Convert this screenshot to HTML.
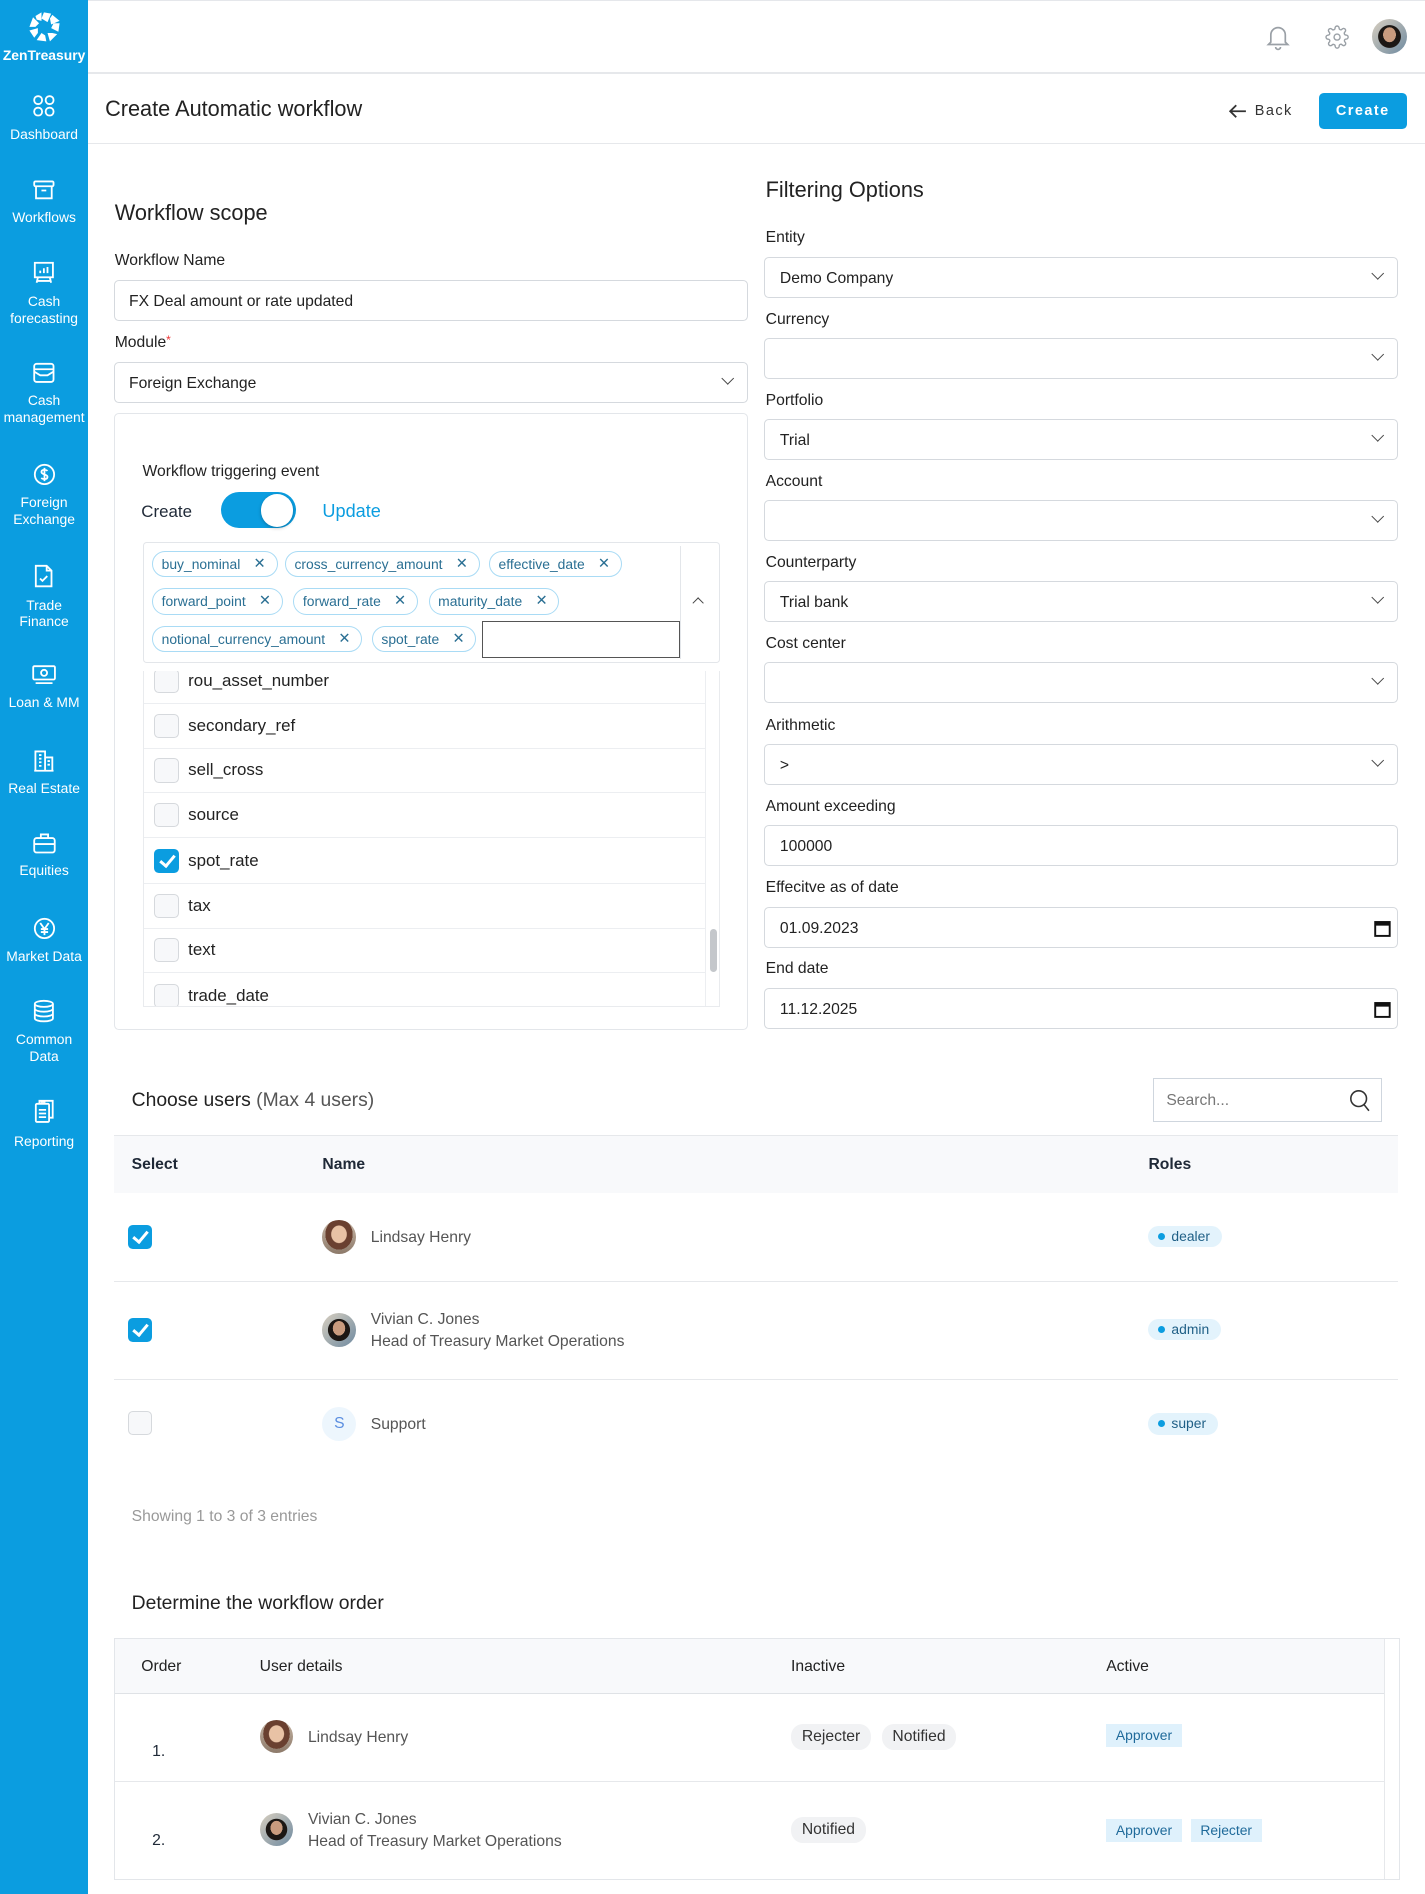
<!DOCTYPE html>
<html><head><meta charset="utf-8"><style>
html,body{margin:0;padding:0}
body{width:1180px;height:1568px;zoom:1.20763;position:relative;overflow:hidden;background:#fff;font-family:"Liberation Sans",sans-serif;color:#1f2937;font-size:14px;line-height:1.4}
.a{position:absolute}
.sb{left:0;top:0;width:73px;height:1568px;background:#0b9de0;color:#fff}
.ni{position:absolute;left:0;width:73px;text-align:center;font-size:11.5px;line-height:14px;color:#fff}
.ni svg{display:block;margin:0 auto 7px}
.lbl{position:absolute;font-size:13px;color:#222}
.inp{position:absolute;border:1px solid #d5d9de;border-radius:4px;box-sizing:border-box;height:34px;font-size:13px;line-height:35px;padding-left:12px;color:#222;background:#fff}
.chev{position:absolute;right:12px;top:9px;width:7px;height:7px;border-right:1.5px solid #444;border-bottom:1.5px solid #444;transform:rotate(45deg)}
.chip{position:absolute;height:22px;border:1px solid #a9dbf5;border-radius:12px;box-sizing:border-box;font-size:11.5px;line-height:20px;color:#2a6f93;padding:0 30px 0 7px}
.chip:after{content:"\2715";position:absolute;right:9px;top:0;font-size:12px;color:#2a6f93}
.row{position:absolute;left:118px;width:466px;height:37px;border-bottom:1px solid #eceef1;box-sizing:border-box}
.cb{position:absolute;left:9px;top:8px;width:20px;height:20px;border:1px solid #d6d9dd;border-radius:4px;box-sizing:border-box;background:#f7f8fa}
.cb.on{background:#0b9de0;border-color:#0b9de0}
.cb.on:after{content:"";position:absolute;left:6px;top:2px;width:5px;height:10px;border-right:2.5px solid #fff;border-bottom:2.5px solid #fff;transform:rotate(40deg)}
.row span{position:absolute;left:37px;top:8px;font-size:14px;color:#222}
.av{position:absolute;width:28px;height:28px;border-radius:50%;background:radial-gradient(ellipse 40% 45% at 50% 42%,#e8c2a5 0 55%,#6a4030 60% 100%,transparent 101%),linear-gradient(#c7b6a6,#8d7a6a)}
.av2{background:radial-gradient(ellipse 30% 35% at 50% 45%,#c99b7e 0 60%,transparent 62%),radial-gradient(circle at 50% 50%,#1c1714 0 45%,transparent 47%),linear-gradient(135deg,#d8cfc0,#6f8aa0)}
.role{position:absolute;height:18px;border-radius:9px;background:#e3f3fc;font-size:11.5px;line-height:18px;color:#1f5f86;padding:0 10px 0 19px}
.role:before{content:"";position:absolute;left:8px;top:6px;width:6px;height:6px;border-radius:50%;background:#0b9de0}
.pill{position:absolute;height:21px;border-radius:10px;background:#f1f2f4;font-size:13px;line-height:21px;padding:0 9px;color:#333}
.tag{position:absolute;height:19px;background:#dff1fc;font-size:11.5px;line-height:19px;padding:0 8px;color:#1f6a9a}
</style></head><body>
<div class="a sb">
<svg class="a" style="left:22px;top:8px" width="30" height="28" viewBox="0 0 30 28"><g fill="#fff"><path d="M14 2l6 1-3 7-5-3z"/><path d="M21 4l6 5-7 3-1-5z"/><path d="M27 11l-1 7-6-3 2-4z"/><path d="M25 20l-6 6-2-7 4 0z"/><path d="M16 26l-8-1 4-6 3 2z"/><path d="M6 23l-4-6 7-2 0 4z"/><path d="M2 14l3-8 5 5-3 3z"/><path d="M7 5l5-3 0 7-4-1z"/></g></svg>
<div class="a" style="left:0;width:73px;top:39px;text-align:center;font-size:11.5px;font-weight:bold;color:#fff;line-height:14px">ZenTreasury</div>
<div class="ni" style="top:79px"><svg width="18" height="18" viewBox="0 0 18 18" fill="none" stroke="#fff" stroke-width="1.5"><rect x="1" y="1" width="6.5" height="6.5" rx="3"/><rect x="10.5" y="1" width="6.5" height="6.5" rx="3"/><rect x="1" y="10.5" width="6.5" height="6.5" rx="3"/><rect x="10.5" y="10.5" width="6.5" height="6.5" rx="3"/></svg>Dashboard</div>
<div class="ni" style="top:148px"><svg width="18" height="18" viewBox="0 0 18 18" fill="none" stroke="#fff" stroke-width="1.5"><rect x="1" y="2" width="16" height="4" rx="1"/><path d="M2.5 6v10h13V6M7 9.5h4"/></svg>Workflows</div>
<div class="ni" style="top:216px"><svg width="18" height="20" viewBox="0 0 18 20" fill="none" stroke="#fff" stroke-width="1.5"><rect x="1.5" y="1.5" width="15" height="12"/><path d="M6 10V8M9 10V6M12 10V5M4 14l-1 4M14 14l1 4M3 16.5h12"/></svg>Cash<br>forecasting</div>
<div class="ni" style="top:300px"><svg width="18" height="18" viewBox="0 0 18 18" fill="none" stroke="#fff" stroke-width="1.5"><rect x="1" y="1.5" width="16" height="15" rx="2"/><path d="M1 6h16M1 8l5 3h6l5-3"/></svg>Cash<br>management</div>
<div class="ni" style="top:383px"><svg width="19" height="19" viewBox="0 0 19 19" fill="none" stroke="#fff" stroke-width="1.5"><circle cx="9.5" cy="9.5" r="8"/><path d="M12 6.5c-1-1-5-1.5-5 1s5 1.5 5 4-4 2-5.2 1M9.5 4v11"/></svg>Foreign<br>Exchange</div>
<div class="ni" style="top:467px"><svg width="16" height="20" viewBox="0 0 16 20" fill="none" stroke="#fff" stroke-width="1.5"><path d="M1.5 1.5h9l4 4v13h-13z M10.5 1.5v4h4M5 12l2 2 4-4"/></svg>Trade<br>Finance</div>
<div class="ni" style="top:551px"><svg width="20" height="17" viewBox="0 0 20 17" fill="none" stroke="#fff" stroke-width="1.5"><rect x="1" y="1" width="18" height="11" rx="1"/><circle cx="10" cy="6.5" r="2.5"/><path d="M3 15h14"/></svg>Loan &amp; MM</div>
<div class="ni" style="top:620px"><svg width="18" height="19" viewBox="0 0 18 19" fill="none" stroke="#fff" stroke-width="1.5"><path d="M2 18V2h8v16M10 7h6v11M1 18h16M5 5h2M5 8h2M5 11h2M5 14h2M12 10h2M12 13h2"/></svg>Real Estate</div>
<div class="ni" style="top:689px"><svg width="19" height="18" viewBox="0 0 19 18" fill="none" stroke="#fff" stroke-width="1.5"><rect x="1" y="5" width="17" height="12" rx="2"/><path d="M6.5 5V2h6v3M1 10h17"/></svg>Equities</div>
<div class="ni" style="top:759px"><svg width="19" height="19" viewBox="0 0 19 19" fill="none" stroke="#fff" stroke-width="1.5"><circle cx="9.5" cy="9.5" r="8"/><path d="M6 5l3.5 5 3.5-5M9.5 10v5M6.5 10h6M6.5 12.5h6"/></svg>Market Data</div>
<div class="ni" style="top:827px"><svg width="18" height="20" viewBox="0 0 18 20" fill="none" stroke="#fff" stroke-width="1.5"><ellipse cx="9" cy="4" rx="7.5" ry="2.5"/><path d="M1.5 4v12c0 1.4 3.4 2.5 7.5 2.5s7.5-1.1 7.5-2.5V4M1.5 8c0 1.4 3.4 2.5 7.5 2.5S16.5 9.4 16.5 8M1.5 12c0 1.4 3.4 2.5 7.5 2.5s7.5-1.1 7.5-2.5"/></svg>Common<br>Data</div>
<div class="ni" style="top:910px"><svg width="17" height="21" viewBox="0 0 17 21" fill="none" stroke="#fff" stroke-width="1.5"><rect x="1.5" y="4" width="11" height="15" rx="1"/><path d="M4.5 4V1.5h11v14h-3M4 9h6M4 12h6M4 15h6M5.5 2.5h4"/></svg>Reporting</div>
</div>

<div class="a" style="left:73px;top:0;width:1107px;height:1px;background:#e5e7eb"></div>
<div class="a" style="left:73px;top:60px;width:1107px;height:1px;background:#e6e8eb"></div>
<svg class="a" style="left:1048px;top:20px" width="20" height="22" viewBox="0 0 20 22" fill="none" stroke="#9aa0a6" stroke-width="1.4"><path d="M4 15V9a6 6 0 0112 0v6l2 2H2z M8 19a2 2 0 004 0"/></svg>
<svg class="a" style="left:1097px;top:21px" width="20" height="20" viewBox="0 0 24 24" fill="none" stroke="#9aa0a6" stroke-width="1.4"><circle cx="12" cy="12" r="3"/><path d="M19.4 15a1.7 1.7 0 00.3 1.8l.1.1a2 2 0 11-2.8 2.8l-.1-.1a1.7 1.7 0 00-1.8-.3 1.7 1.7 0 00-1 1.5V21a2 2 0 11-4 0v-.1a1.7 1.7 0 00-1.1-1.5 1.7 1.7 0 00-1.8.3l-.1.1a2 2 0 11-2.8-2.8l.1-.1a1.7 1.7 0 00.3-1.8 1.7 1.7 0 00-1.5-1H3a2 2 0 110-4h.1a1.7 1.7 0 001.5-1.1 1.7 1.7 0 00-.3-1.8l-.1-.1a2 2 0 112.8-2.8l.1.1a1.7 1.7 0 001.8.3H9a1.7 1.7 0 001-1.5V3a2 2 0 114 0v.1a1.7 1.7 0 001 1.5 1.7 1.7 0 001.8-.3l.1-.1a2 2 0 112.8 2.8l-.1.1a1.7 1.7 0 00-.3 1.8V9a1.7 1.7 0 001.5 1H21a2 2 0 110 4h-.1a1.7 1.7 0 00-1.5 1z"/></svg>
<div class="av av2" style="left:1136px;top:16px;width:29px;height:29px"></div>
<div class="a" style="left:87px;top:78px;font-size:18px;color:#222">Create Automatic workflow</div>
<svg class="a" style="left:1018px;top:86px" width="15" height="12" viewBox="0 0 15 12" fill="none" stroke="#333" stroke-width="1.5"><path d="M14 6H2M6 1L1 6l5 5"/></svg>
<div class="a" style="left:1039px;top:84px;font-size:12px;letter-spacing:1.2px;color:#333">Back</div>
<div class="a" style="left:1092px;top:77px;width:73px;height:30px;background:#0b9de0;border-radius:4px;color:#fff;font-size:12px;font-weight:bold;letter-spacing:1.2px;text-align:center;line-height:30px">Create</div>
<div class="a" style="left:73px;top:118px;width:1107px;height:1px;background:#e6e8eb"></div>

<div class="a" style="left:95px;top:164px;font-size:18px;color:#222">Workflow scope</div>
<div class="lbl" style="left:95px;top:207px">Workflow Name</div>
<div class="inp" style="left:94px;top:232px;width:525px">FX Deal amount or rate updated</div>
<div class="lbl" style="left:95px;top:275px">Module<span style="color:#e33;font-size:10px;vertical-align:top">*</span></div>
<div class="inp" style="left:94px;top:300px;width:525px">Foreign Exchange<i class="chev"></i></div>
<div class="a" style="left:94px;top:342px;width:525px;height:511px;border:1px solid #e3e6ea;border-radius:4px;box-sizing:border-box"></div>
<div class="lbl" style="left:118px;top:382px">Workflow triggering event</div>
<div class="a" style="left:117px;top:414px;font-size:14px">Create</div>
<div class="a" style="left:183px;top:407px;width:62px;height:30px;border-radius:15px;background:#0b9de0"></div>
<div class="a" style="left:216px;top:409px;width:27px;height:27px;border-radius:50%;background:#fff;box-shadow:0 1px 3px rgba(0,0,0,.25)"></div>
<div class="a" style="left:267px;top:413px;font-size:15px;color:#0b9de0">Update</div>
<div class="a" style="left:118px;top:449px;width:478px;height:100px;border:1px solid #e3e6ea;border-radius:3px;box-sizing:border-box"></div>
<div class="a" style="left:563px;top:452px;width:1px;height:94px;background:#e3e6ea"></div>
<div class="a" style="left:575px;top:496px;width:6px;height:6px;border-left:1.3px solid #444;border-top:1.3px solid #444;transform:rotate(45deg)"></div>
<div class="chip" style="left:126px;top:456px">buy_nominal</div>
<div class="chip" style="left:236px;top:456px">cross_currency_amount</div>
<div class="chip" style="left:405px;top:456px">effective_date</div>
<div class="chip" style="left:126px;top:487px">forward_point</div>
<div class="chip" style="left:243px;top:487px">forward_rate</div>
<div class="chip" style="left:355px;top:487px">maturity_date</div>
<div class="chip" style="left:126px;top:518px">notional_currency_amount</div>
<div class="chip" style="left:308px;top:518px">spot_rate</div>
<div class="a" style="left:399px;top:514px;width:164px;height:31px;border:1px solid #555;box-sizing:border-box"></div>
<div class="a" style="left:118px;top:556px;width:478px;height:278px;border:1px solid #e9ebee;border-top:none;box-sizing:border-box;overflow:hidden">
<div class="row" style="left:0;top:-10px"><i class="cb"></i><span>rou_asset_number</span></div>
<div class="row" style="left:0;top:27px"><i class="cb"></i><span>secondary_ref</span></div>
<div class="row" style="left:0;top:64px"><i class="cb"></i><span>sell_cross</span></div>
<div class="row" style="left:0;top:101px"><i class="cb"></i><span>source</span></div>
<div class="row" style="left:0;top:139px"><i class="cb on"></i><span>spot_rate</span></div>
<div class="row" style="left:0;top:176px"><i class="cb"></i><span>tax</span></div>
<div class="row" style="left:0;top:213px"><i class="cb"></i><span>text</span></div>
<div class="row" style="left:0;top:251px"><i class="cb"></i><span>trade_date</span></div>
<div class="a" style="left:465px;top:0;width:1px;height:278px;background:#eceef1"></div>
<div class="a" style="left:469px;top:213px;width:6px;height:36px;border-radius:3px;background:#c4c7cb"></div>
</div>

<div class="a" style="left:634px;top:145px;font-size:18px;color:#222">Filtering Options</div>
<div class="lbl" style="left:634px;top:188px">Entity</div>
<div class="inp" style="left:633px;top:213px;width:525px">Demo Company<i class="chev"></i></div>
<div class="lbl" style="left:634px;top:256px">Currency</div>
<div class="inp" style="left:633px;top:280px;width:525px"><i class="chev"></i></div>
<div class="lbl" style="left:634px;top:323px">Portfolio</div>
<div class="inp" style="left:633px;top:347px;width:525px">Trial<i class="chev"></i></div>
<div class="lbl" style="left:634px;top:390px">Account</div>
<div class="inp" style="left:633px;top:414px;width:525px"><i class="chev"></i></div>
<div class="lbl" style="left:634px;top:457px">Counterparty</div>
<div class="inp" style="left:633px;top:481px;width:525px">Trial bank<i class="chev"></i></div>
<div class="lbl" style="left:634px;top:524px">Cost center</div>
<div class="inp" style="left:633px;top:548px;width:525px"><i class="chev"></i></div>
<div class="lbl" style="left:634px;top:592px">Arithmetic</div>
<div class="inp" style="left:633px;top:616px;width:525px">&gt;<i class="chev"></i></div>
<div class="lbl" style="left:634px;top:659px">Amount exceeding</div>
<div class="inp" style="left:633px;top:683px;width:525px">100000</div>
<div class="lbl" style="left:634px;top:726px">Effecitve as of date</div>
<div class="inp" style="left:633px;top:751px;width:525px">01.09.2023<svg class="a" style="right:5px;top:9px" width="14" height="15" viewBox="0 0 14 15"><rect x="1" y="2.5" width="12" height="11.5" fill="none" stroke="#111" stroke-width="1.6"/><rect x="1" y="2.5" width="12" height="3" fill="#111"/></svg></div>
<div class="lbl" style="left:634px;top:793px">End date</div>
<div class="inp" style="left:633px;top:818px;width:525px">11.12.2025<svg class="a" style="right:5px;top:9px" width="14" height="15" viewBox="0 0 14 15"><rect x="1" y="2.5" width="12" height="11.5" fill="none" stroke="#111" stroke-width="1.6"/><rect x="1" y="2.5" width="12" height="3" fill="#111"/></svg></div>

<div class="a" style="left:109px;top:900px;font-size:16px;color:#222">Choose users <span style="color:#555">(Max 4 users)</span></div>
<div class="a" style="left:955px;top:893px;width:189px;height:36px;border:1px solid #cfd6de;box-sizing:border-box;font-size:13px;line-height:36px;padding-left:10px;color:#777">Search...<svg class="a" style="right:8px;top:8px" width="18" height="19" viewBox="0 0 18 19" fill="none" stroke="#333" stroke-width="1.3"><circle cx="8" cy="8" r="6.5"/><path d="M12.5 13l4 5"/></svg></div>
<div class="a" style="left:94px;top:940px;width:1064px;height:48px;background:#f8f9fb;border-top:1px solid #e6e8eb;box-sizing:border-box"></div>
<div class="a" style="left:109px;top:956px;font-size:13px;font-weight:bold">Select</div>
<div class="a" style="left:267px;top:956px;font-size:13px;font-weight:bold">Name</div>
<div class="a" style="left:951px;top:956px;font-size:13px;font-weight:bold">Roles</div>
<i class="cb on" style="left:106px;top:1014px;position:absolute"></i>
<div class="av" style="left:267px;top:1010px"></div>
<div class="a" style="left:307px;top:1016px;font-size:13px;color:#555">Lindsay Henry</div>
<div class="role" style="left:951px;top:1015px">dealer</div>
<div class="a" style="left:94px;top:1061px;width:1064px;height:1px;background:#e6e8eb"></div>
<i class="cb on" style="left:106px;top:1091px;position:absolute"></i>
<div class="av av2" style="left:267px;top:1087px"></div>
<div class="a" style="left:307px;top:1084px;font-size:13px;color:#555">Vivian C. Jones</div>
<div class="a" style="left:307px;top:1102px;font-size:13px;color:#555">Head of Treasury Market Operations</div>
<div class="role" style="left:951px;top:1092px">admin</div>
<div class="a" style="left:94px;top:1142px;width:1064px;height:1px;background:#e6e8eb"></div>
<i class="cb" style="left:106px;top:1168px;position:absolute"></i>
<div class="a" style="left:267px;top:1165px;width:28px;height:28px;border-radius:50%;background:#edf6fd;color:#5b8ee0;font-size:13px;text-align:center;line-height:28px">S</div>
<div class="a" style="left:307px;top:1171px;font-size:13px;color:#555">Support</div>
<div class="role" style="left:951px;top:1170px">super</div>
<div class="a" style="left:109px;top:1247px;font-size:13px;color:#999">Showing 1 to 3 of 3 entries</div>

<div class="a" style="left:109px;top:1317px;font-size:16px;color:#222">Determine the workflow order</div>
<div class="a" style="left:94px;top:1356px;width:1065px;height:201px;border:1px solid #e3e6ea;box-sizing:border-box"></div>
<div class="a" style="left:95px;top:1357px;width:1051px;height:45px;background:#f8f9fb;border-bottom:1px solid #dfe2e6"></div>
<div class="a" style="left:1146px;top:1357px;width:1px;height:199px;background:#e6e8eb"></div>
<div class="a" style="left:117px;top:1371px;font-size:13px;color:#222">Order</div>
<div class="a" style="left:215px;top:1371px;font-size:13px;color:#222">User details</div>
<div class="a" style="left:655px;top:1371px;font-size:13px;color:#222">Inactive</div>
<div class="a" style="left:916px;top:1371px;font-size:13px;color:#222">Active</div>
<div class="a" style="left:126px;top:1442px;font-size:13px">1.</div>
<div class="av" style="left:215px;top:1424px"></div>
<div class="a" style="left:255px;top:1430px;font-size:13px;color:#555">Lindsay Henry</div>
<div class="pill" style="left:655px;top:1428px">Rejecter</div>
<div class="pill" style="left:730px;top:1428px">Notified</div>
<div class="tag" style="left:916px;top:1428px">Approver</div>
<div class="a" style="left:95px;top:1475px;width:1051px;height:1px;background:#e6e8eb"></div>
<div class="a" style="left:126px;top:1515px;font-size:13px">2.</div>
<div class="av av2" style="left:215px;top:1501px"></div>
<div class="a" style="left:255px;top:1498px;font-size:13px;color:#555">Vivian C. Jones</div>
<div class="a" style="left:255px;top:1516px;font-size:13px;color:#555">Head of Treasury Market Operations</div>
<div class="pill" style="left:655px;top:1505px">Notified</div>
<div class="tag" style="left:916px;top:1506px">Approver</div>
<div class="tag" style="left:986px;top:1506px">Rejecter</div>
</body></html>
